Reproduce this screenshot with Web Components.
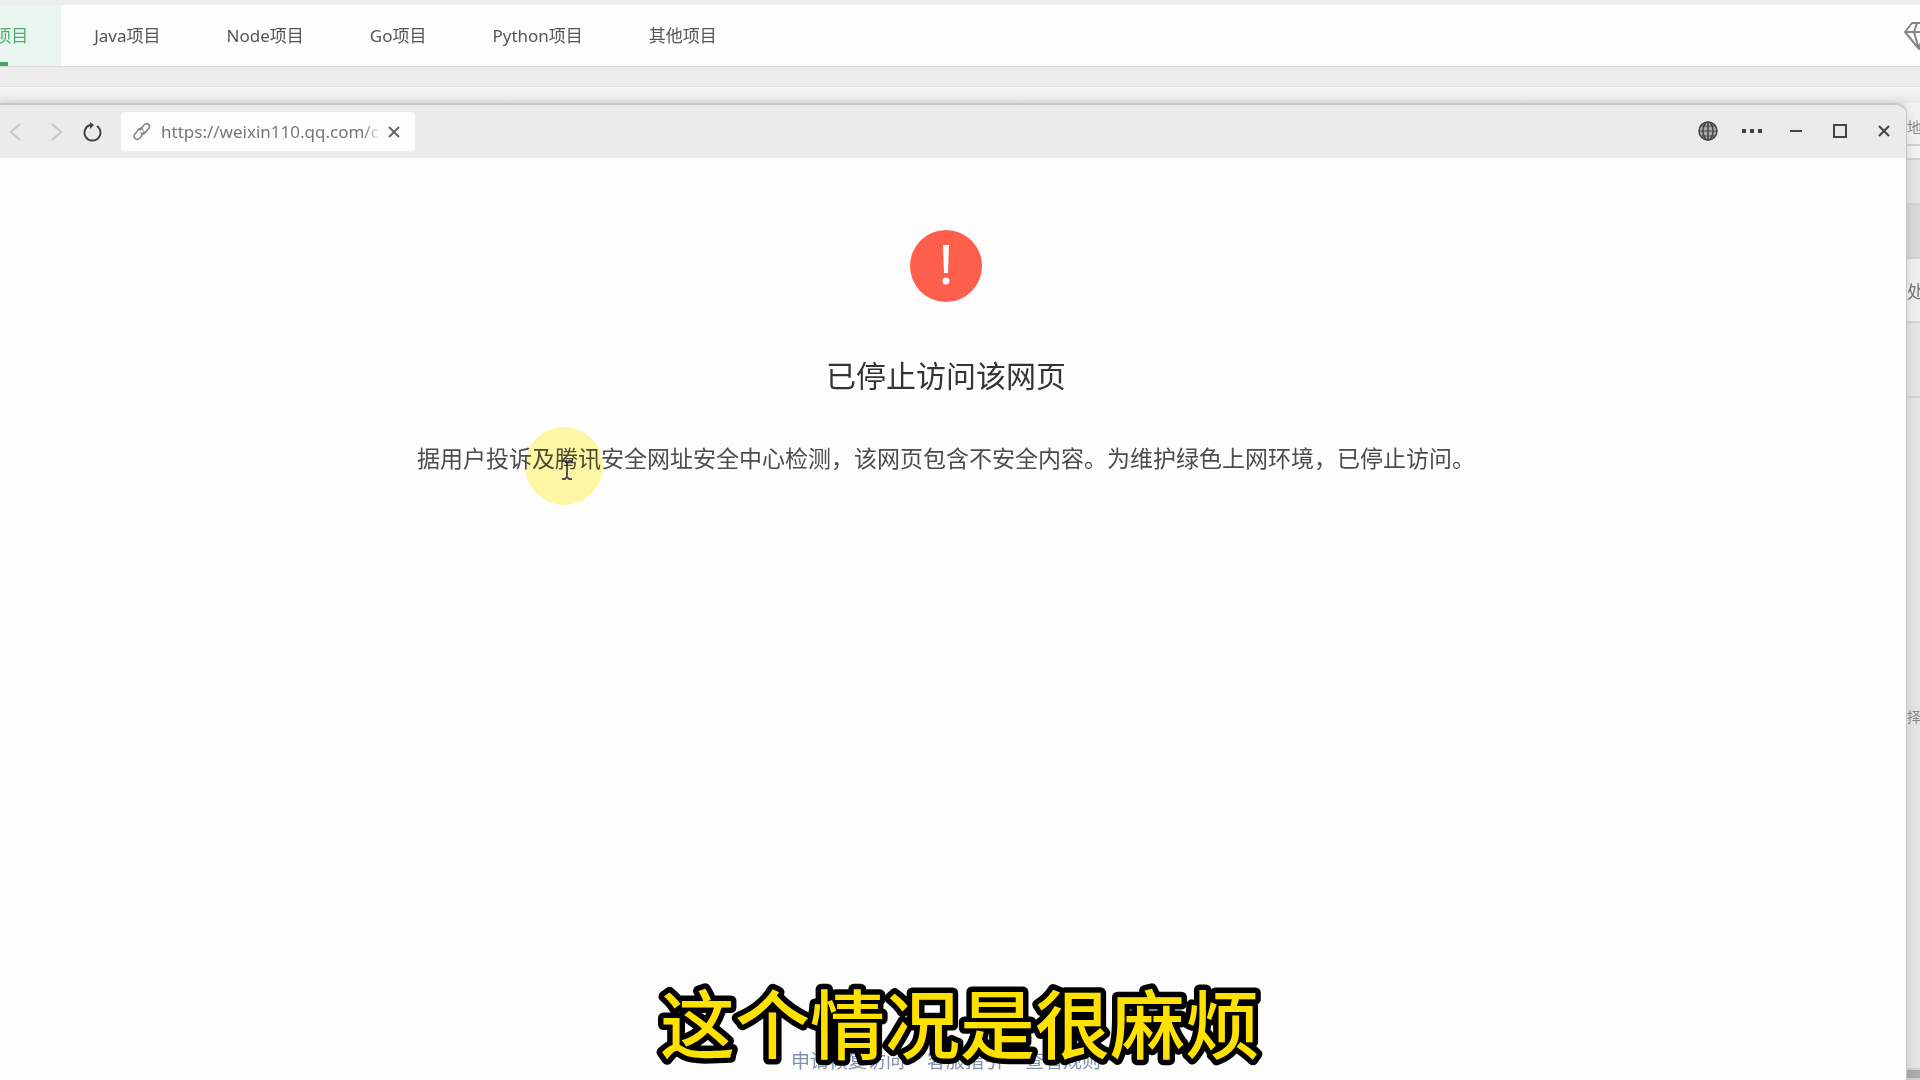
<!DOCTYPE html>
<html lang="zh-CN">
<head>
<meta charset="utf-8">
<title>已停止访问该网页</title>
<style>
html, body { margin: 0; height: 100%; }
body { font-family: "Noto Sans", "Noto Sans CJK SC", sans-serif; color: #444; background: #ececec; overflow: hidden; }
</style>
</head>
<body>
<desktop-scene></desktop-scene>
<script>
const define = (name, html) => {
  const template = document.createElement('template');
  template.innerHTML = html;
  customElements.define(name, class extends HTMLElement {
    constructor() {
      super();
      this.attachShadow({ mode: 'open' }).append(template.content.cloneNode(true));
    }
  });
};

define('project-tab', `
<style>
:host { display: flex; }
a { display: flex; align-items: center; padding: 0 33px 2px; font-size: 17px; color: #555; text-decoration: none; white-space: nowrap; }
:host([active]) a { color: #4fae72; background: #ebf5ef; position: relative; }
:host([active]) a::after { content: ""; position: absolute; left: 33px; right: 53px; bottom: 0; height: 4px; background: #3fa866; }
</style>
<a href="#"><slot></slot></a>`);

define('project-nav', `
<style>
:host { display: flex; box-sizing: border-box; height: 67px; justify-content: space-between; background: #fdfdfd; border-top: 5px solid #ededed; border-bottom: 1px solid #dcdcdc; }
nav { display: flex; margin-left: -72px; }
button { border: 0; padding: 0; background: none; margin-right: -14px; }
svg { display: block; }
</style>
<nav aria-label="项目">
  <project-tab active>PHP项目</project-tab>
  <project-tab>Java项目</project-tab>
  <project-tab>Node项目</project-tab>
  <project-tab>Go项目</project-tab>
  <project-tab>Python项目</project-tab>
  <project-tab>其他项目</project-tab>
</nav>
<button type="button" aria-label="会员"><svg width="30" height="30" viewBox="0 0 30 30" fill="none" stroke="#858585" stroke-width="2" stroke-linejoin="round"><path d="M8 2h14l7 9-14 17L1 11zM1 11h28M13 2l-3 9 5 17 5-17-3-9"/></svg></button>`);

define('tool-button', `
<style>
:host { display: flex; }
button { display: grid; place-items: center; width: 100%; padding: 0; border: 0; background: none; color: inherit; }
</style>
<button type="button"><slot></slot></button>`);

define('address-box', `
<style>
:host { display: flex; box-sizing: border-box; align-items: center; width: 294px; height: 39px; padding: 0 10px; background: #fdfdfd; border-radius: 4px; }
input { flex: 1; min-width: 0; border: 0; padding: 0; margin: 0 2px 0 8px; background: none; outline: 0; font: 17px "Noto Sans", sans-serif; color: #777; -webkit-mask-image: linear-gradient(90deg, #000 92%, transparent); mask-image: linear-gradient(90deg, #000 92%, transparent); }
tool-button { width: 22px; }
svg { flex: none; }
</style>
<svg width="22" height="22" viewBox="0 0 22 22" fill="none" stroke="#888" stroke-width="1.6" stroke-linecap="round"><path d="M9 9l4-5c3-3 7 0 5 3l-4 5c-1 1-3 2-4 0M13 11l-4 6c-3 3-8 0-5-4l4-5c1-1 3-1 4 1"/></svg>
<input type="text" aria-label="网址" value="https://weixin110.qq.com/cgi-bin">
<tool-button><svg width="12" height="12" viewBox="0 0 12 12" stroke="#666" stroke-width="2"><path d="M1 1l10 10M11 1L1 11"/></svg></tool-button>`);

define('browser-bar', `
<style>
:host { display: flex; align-items: center; justify-content: space-between; height: 53px; background: #ebebeb; color: #444; }
div { display: flex; align-items: center; }
svg { display: block; fill: none; stroke: currentColor; stroke-width: 2; }
.off { color: #c8c8c8; }
.back { width: 30px; }
.forward { width: 53px; }
.reload { width: 20px; }
.right tool-button { width: 44px; }
.right { padding-bottom: 2px; }
</style>
<div class="left">
  <tool-button class="off back"><svg width="12" height="18" viewBox="0 0 12 18"><path d="M11 1L2 9l9 8"/></svg></tool-button>
  <tool-button class="off forward"><svg width="12" height="18" viewBox="0 0 12 18"><path d="M1 1l9 8-9 8"/></svg></tool-button>
  <tool-button class="reload"><svg width="20" height="20" viewBox="0 0 20 20"><path d="M14 4a8 8 0 1 1-7-1"/><path d="M7 0l4 3-4 4z" fill="currentColor" stroke="none"/></svg></tool-button>
</div>
<slot></slot>
<div class="right">
  <tool-button><svg width="20" height="20" viewBox="0 0 20 20" style="stroke-width:1"><circle cx="10" cy="10" r="9" fill="#aaa" stroke-width="1.5"/><path d="M10 1v18" stroke-width="1.5"/><path d="M1 10h18M3 5h14M3 15h14"/><ellipse cx="10" cy="10" rx="5" ry="9" stroke-width="1.5"/></svg></tool-button>
  <tool-button><svg width="20" height="4" viewBox="0 0 20 4" style="fill:currentColor;stroke:none"><path d="M0 0h4v4H0zM8 0h4v4H8zM16 0h4v4h-4z"/></svg></tool-button>
  <tool-button><svg width="12" height="2" viewBox="0 0 12 2"><path d="M0 1h12"/></svg></tool-button>
  <tool-button><svg width="14" height="14" viewBox="0 0 14 14"><path d="M1 1h12v12H1z"/></svg></tool-button>
  <tool-button><svg width="12" height="12" viewBox="0 0 12 12"><path d="M1 1l10 10M11 1L1 11"/></svg></tool-button>
</div>`);

define('blocked-notice', `
<style>
:host { flex: 1; display: flex; flex-direction: column; align-items: center; padding: 72px 14px 7px 0; background: #fdfdfd; }
svg { display: block; }
h1 { margin: 52px 0 0; font-size: 30px; line-height: 44px; font-weight: 400; color: #333; }
p { margin: 43px 0 0; font-size: 23px; line-height: 34px; color: #4c4c4c; white-space: nowrap; }
footer { margin-top: auto; display: flex; gap: 22px; font-size: 19px; line-height: 24px; }
a { color: #8391b0; text-decoration: none; }
</style>
<svg width="72" height="72" viewBox="0 0 72 72"><circle cx="36" cy="36" r="36" fill="#fd5f4c"/><path d="M33 15h6l-1 28h-4z" fill="#fff"/><circle cx="36" cy="51" r="3.5" fill="#fff"/></svg>
<h1>已停止访问该网页</h1>
<p>据用户投诉及腾讯安全网址安全中心检测，该网页包含不安全内容。为维护绿色上网环境，已停止访问。</p>
<footer><a href="#">申请恢复访问</a><a href="#">客服指引</a><a href="#">查看规则</a></footer>`);

define('browser-window', `
<style>
:host { position: relative; z-index: 1; flex: 1; display: flex; flex-direction: column; min-width: 0; overflow: hidden; border-top: 2px solid #c6c6c6; border-right: 1px solid #c8c8c8; border-radius: 0 12px 0 0; box-shadow: 0 0 10px #0002; background: #fdfdfd; }
</style>
<slot></slot>`);

define('side-panel', `
<style>
:host { flex: none; width: 13px; display: flex; flex-direction: column; overflow: hidden; background: #e4e4e4; color: #888; font-size: 15px; white-space: nowrap; }
div { box-sizing: border-box; display: flex; align-items: center; border-bottom: 2px solid #d2d2d2; }
</style>
<div style="height:43px;background:#f2f2f2;padding-top:6px">地</div>
<div style="height:14px;background:#f0f0f0"></div>
<div style="height:45px"></div>
<div style="height:54px;background:#d8d8d8"></div>
<div style="height:64px;background:#eee;font-size:17px;color:#777">处</div>
<div style="height:75px"></div>
<div style="flex:1;font-size:14px;padding-bottom:34px">择</div>
<div style="height:10px;background:#aaa"></div>`);

define('pointer-spot', `
<style>
:host { position: absolute; z-index: 2; left: 525px; top: 427px; width: 78px; height: 78px; border-radius: 50%; background: #fff56a99; mix-blend-mode: multiply; }
svg { display: block; margin: 33px 0 0 36px; }
</style>
<svg width="12" height="20" viewBox="0 0 12 20" fill="none" stroke="#555" stroke-width="2"><path d="M1 1h3l2 2 2-2h3M6 3v14M1 19h3l2-2 2 2h3"/></svg>`);

define('video-caption', `
<style>
:host { position: absolute; z-index: 3; left: 0; right: 0; bottom: 0; pointer-events: none; }
svg { display: block; width: 100%; height: 110px; }
text { font: 500 75px "Noto Sans CJK SC", sans-serif; fill: #ffe100; stroke: #000; stroke-width: 11px; stroke-linejoin: round; paint-order: stroke; text-anchor: middle; }
</style>
<svg><text x="50%" y="83">这个情况是很麻烦</text></svg>`);

define('desktop-scene', `
<style>
:host { position: relative; display: flex; flex-direction: column; height: 100vh; overflow: hidden; background: #ececec; }
.strip { height: 19px; border-bottom: 1px solid #e2e2e2; }
.gap { height: 16px; background: linear-gradient(#f6f6f6, #e8e8e8); }
main { flex: 1; display: flex; min-height: 0; }
address-box { margin: 0 auto 0 18px; }
</style>
<project-nav></project-nav>
<div class="strip"></div>
<div class="gap"></div>
<main>
  <browser-window>
    <browser-bar><address-box></address-box></browser-bar>
    <blocked-notice></blocked-notice>
  </browser-window>
  <side-panel></side-panel>
</main>
<pointer-spot></pointer-spot>
<video-caption></video-caption>`);
</script>
</body>
</html>
